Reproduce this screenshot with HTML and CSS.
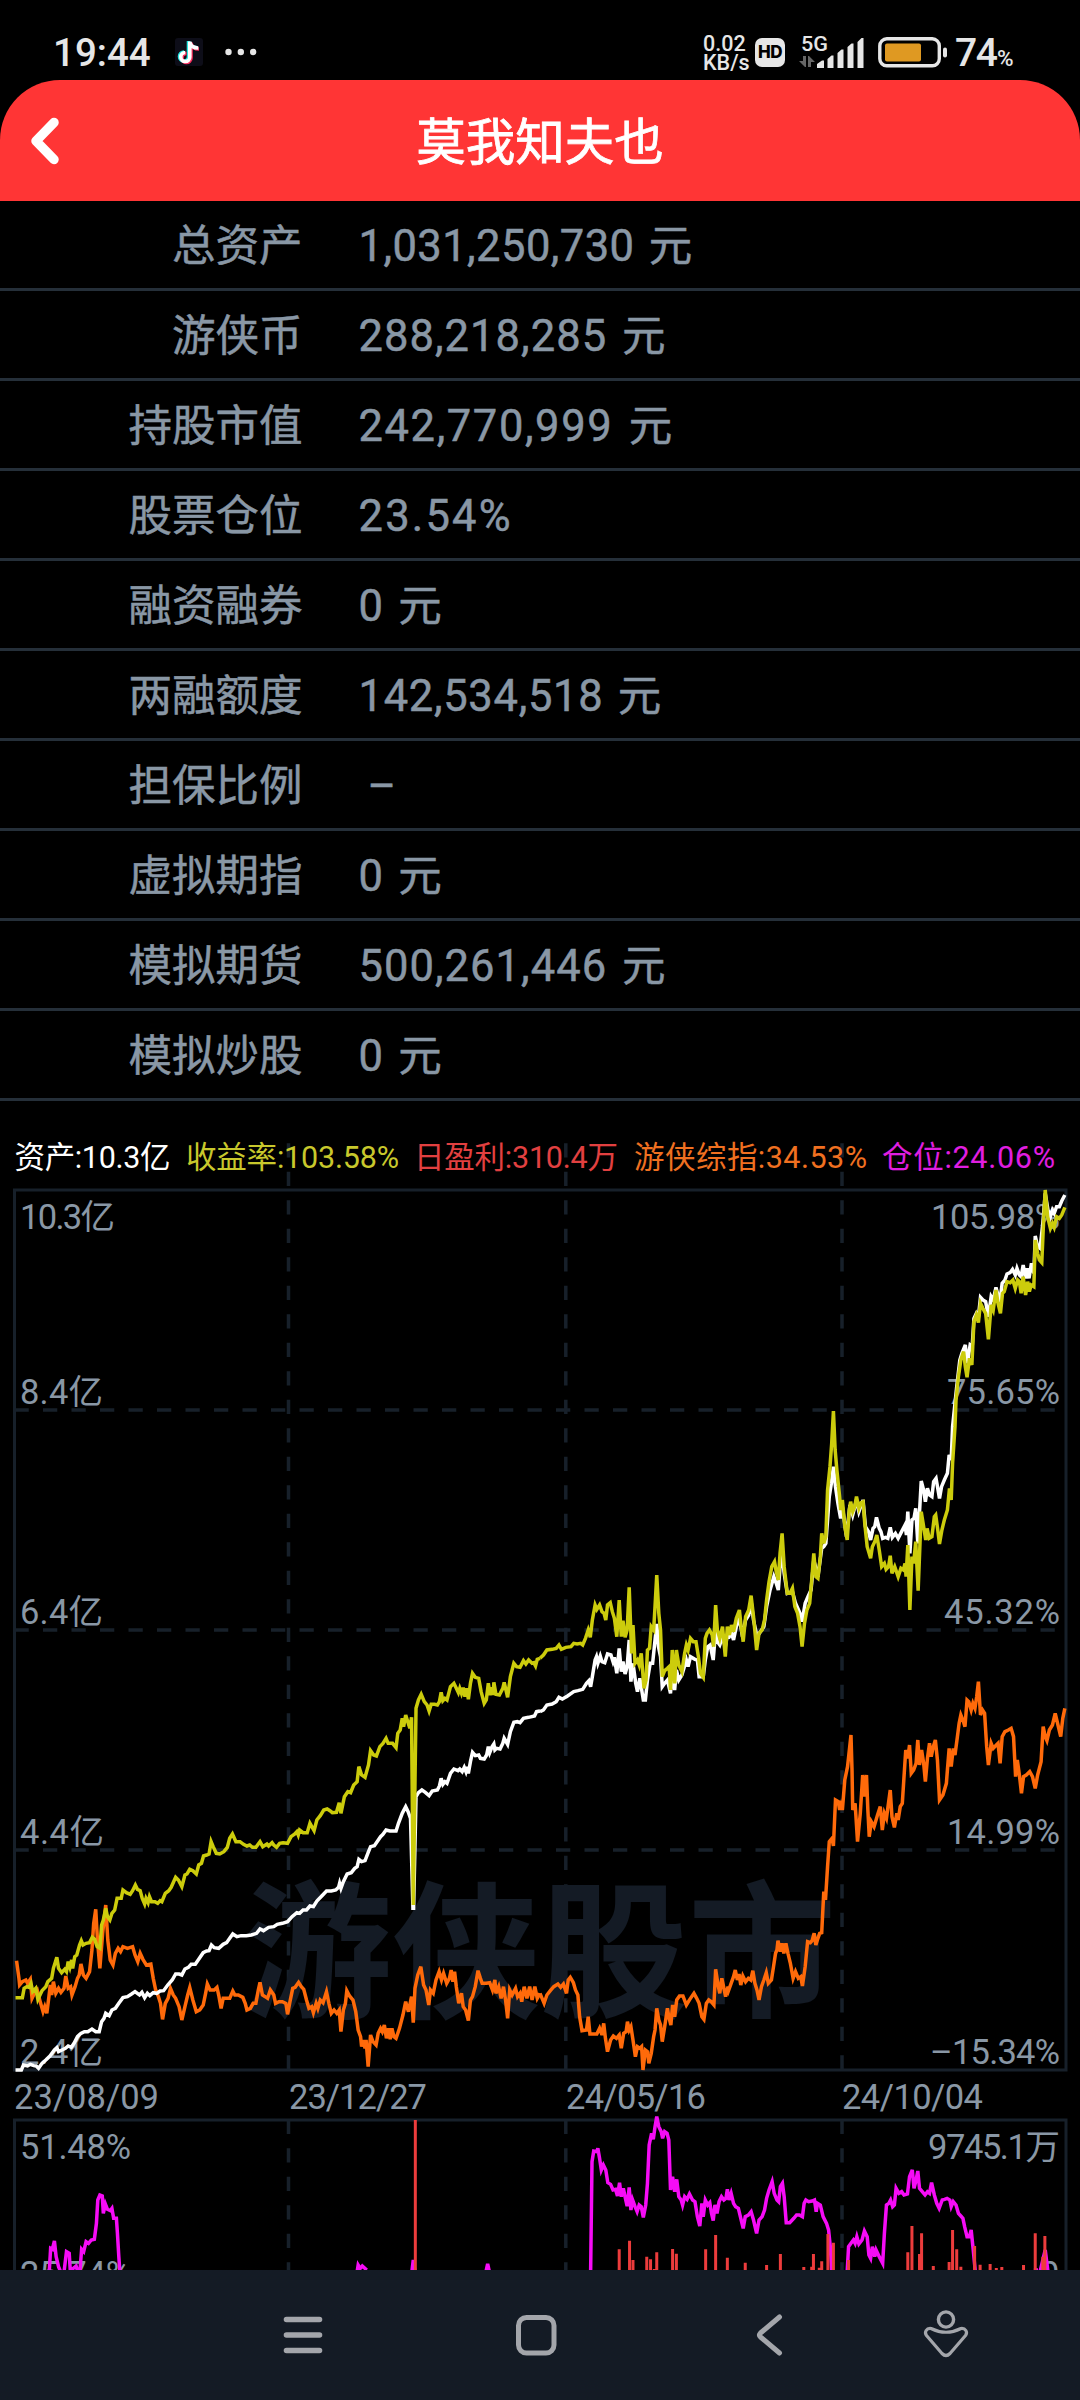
FILE: index.html
```html
<!DOCTYPE html>
<html lang="zh-CN">
<head>
<meta charset="utf-8">
<title>莫我知夫也</title>
<link rel="stylesheet" href="styles.css">
</head>
<body>
<div class="status">
  <span class="clock">19:44</span>
  <svg class="app" width="28" height="28" viewBox="0 0 28 28"><rect width="28" height="28" rx="3" fill="#0d0d18"/><g fill="none" stroke-width="3.6"><path stroke="#25e5e0" d="M13.5 3v15.500a4.500 4.500 0 1 1-4.500-4.500M13.500 4c1 4 4 5.500 8 5.500"/><path stroke="#fa2d5c" d="M16 4.500v15.500a4.500 4.500 0 1 1-4.500-4.500M16 5.500c1 4 4 5.500 8 5.500"/><path stroke="#fff" d="M14.800 3.500v15.500a4.500 4.500 0 1 1-4.500-4.500M14.800 4c1 4.500 4 6 8.500 6"/></g></svg>
  <svg class="dots" width="32" height="8" viewBox="0 0 32 8" fill="#e6e6e6"><circle cx="3.500" cy="4" r="3.200"/><circle cx="15.800" cy="4" r="3.200"/><circle cx="28.200" cy="4" r="3.200"/></svg>
  <span class="rate"><span>0.02</span><span>KB/s</span></span>
  <span class="hd">HD</span>
  <svg class="signal" width="68" height="36" viewBox="0 0 68 36"><text class="net" x="3" y="16.500" textLength="27" lengthAdjust="spacingAndGlyphs">5G</text><g fill="#666"><path d="M5 22h3v11h-1l-6-6h4zM10 22h1l6 6h-4v5h-3z"/></g><g fill="#e6e6e6"><path d="M19 34v-4l5-3.500h2V34zM29.500 34V25l4-3.500h2V34zM39.500 34V19l4-3.500h2V34zM49.500 34V13l4-3.500h2V34zM59.500 34V8l4-4h2V34z"/></g></svg>
  <svg class="battery" width="70" height="32" viewBox="0 0 70 32"><rect x="1.800" y="2.800" width="59.500" height="27" rx="7" fill="none" stroke="#e6e6e6" stroke-width="3.400"/><rect x="7" y="7.500" width="36" height="18" rx="2" fill="#df9922"/><rect x="65" y="11.500" width="4" height="10" rx="2" fill="#e6e6e6"/></svg>
  <span class="level">74</span><span class="pct">%</span>
</div>
<header class="top">
  <svg class="back" width="34" height="54" viewBox="0 0 34 54" fill="none" stroke="#fff" stroke-width="9.500" stroke-linecap="round" stroke-linejoin="round"><path d="M26 8.500L8 27l18 18.500"/></svg>
  <h1>莫我知夫也</h1>
</header>
<dl class="rows">
  <div><dt>总资产</dt><dd class="tight">1,031,250,730 元</dd></div>
  <div><dt>游侠币</dt><dd class="wide">288,218,285 元</dd></div>
  <div><dt>持股市值</dt><dd class="wider">242,770,999 元</dd></div>
  <div><dt>股票仓位</dt><dd class="widest">23.54%</dd></div>
  <div><dt>融资融券</dt><dd>0 元</dd></div>
  <div><dt>两融额度</dt><dd>142,534,518 元</dd></div>
  <div><dt>担保比例</dt><dd class="none">–</dd></div>
  <div><dt>虚拟期指</dt><dd>0 元</dd></div>
  <div><dt>模拟期货</dt><dd class="wide">500,261,446 元</dd></div>
  <div><dt>模拟炒股</dt><dd>0 元</dd></div>
</dl>
<svg class="chart" width="1080" height="1169" viewBox="0 1101 1080 1169">
  <g class="grid">
    <path class="dash" d="M14.500 1410H1066M14.500 1630H1066M14.500 1850H1066"/>
    <path class="dash" d="M288.500 1143.300V2070M565.800 1143.300V2070M842 1143.300V2070"/>
    <path class="dash" d="M288.500 2119.800V2300M565.800 2119.800V2300M842 2119.800V2300"/>
    <rect x="14.500" y="1190" width="1051.500" height="880"/>
    <rect x="14.500" y="2120" width="1051.500" height="300"/>
  </g>
  <text class="mark" x="244" y="2006" textLength="592">游侠股市</text>
  <g class="legend">
    <text x="14.500" y="1167.500" textLength="156" fill="#fff">资产:10.3亿</text>
    <text x="186" y="1167.500" textLength="213" fill="#c8c82c">收益率:103.58%</text>
    <text x="414" y="1167.500" textLength="204" fill="#e24040">日盈利:310.4万</text>
    <text x="634" y="1167.500" textLength="233" fill="#f07020">游侠综指:34.53%</text>
    <text x="882" y="1167.500" textLength="173" fill="#e01ee0">仓位:24.06%</text>
  </g>
  <g class="axis">
    <text x="20" y="1229" textLength="95">10.3亿</text>
    <text x="20" y="1404" textLength="83">8.4亿</text>
    <text x="20" y="1624" textLength="83">6.4亿</text>
    <text x="20" y="1844" textLength="84">4.4亿</text>
    <text x="20" y="2064" textLength="83">2.4亿</text>
    <text x="931" y="1229" textLength="129">105.98%</text>
    <text x="947" y="1404" textLength="113">75.65%</text>
    <text x="944" y="1624" textLength="116">45.32%</text>
    <text x="947" y="1844" textLength="113">14.99%</text>
    <text x="930" y="2064" textLength="130">–15.34%</text>
    <text x="14" y="2109" textLength="145">23/08/09</text>
    <text x="289" y="2109" textLength="138">23/12/27</text>
    <text x="566" y="2109" textLength="140">24/05/16</text>
    <text x="842" y="2109" textLength="141">24/10/04</text>
    <text x="20" y="2159" textLength="111">51.48%</text>
    <text x="20" y="2286" textLength="111">25.74%</text>
    <text x="928" y="2159" textLength="132">9745.1万</text>
    <text x="1040" y="2286">0</text>
  </g>
  <g class="line index">
    <path transform="translate(0 1650) scale(.34439 .33333)" d="M48 932 55 985 57 1005 65 995 75 990 80 1000 88 988 93 1045 100 1030 108 1020 118 1060 125 1085 130 1070 136 1090 142 1040 146 1005 150 1035 155 995 162 1030 170 1015 177 1027 186 1015 191 978 198 1015 205 1010 209 1035 218 1010 225 985 230 975 235 942 242 975 250 985 260 965 267 900 272 820 278 778 283 870 290 955 298 850 307 765 313 870 320 930 328 945 335 910 343 895 350 905 357 890 370 895 385 890 392 915 400 935 407 910 415 928 425 945 438 942 445 985 452 1020 460 1040 466 1060 472 1108 480 1060 488 1045 495 1015 503 1035 510 1045 520 1070 528 1110 537 1070 545 1035 551 1013 560 1050 570 1085 580 1080 590 1065 597 1030 602 1002 610 1020 622 1020 630 1012 635 1035 642 1075 648 1045 658 1045 667 1045 676 1023 682 1035 692 1035 705 1042 712 1060 717 1080 727 1075 735 1060 743 1060 750 1020 755 997 762 1035 770 1040 777 1045 785 1020 795 1035 800 1060 810 1055 820 1055 830 1060 835 1093 842 1055 850 1015 857 1012 867 997 875 1010 882 1018 890 1050 897 1075 905 1070 910 1088 918 1060 923 1075 930 1050 938 1058 948 1025 955 1060 962 1090 970 1080 978 1090 985 1080 990 1145 997 1080 1003 1060 1007 1022 1015 1038 1025 1050 1033 1085 1040 1140 1047 1160 1050 1190 1055 1170 1060 1195 1063 1170 1069 1250 1076 1155 1083 1175 1092 1185 1098 1150 1105 1135 1110 1145 1116 1125 1122 1165 1128 1135 1133 1168 1138 1135 1144 1160 1150 1165 1160 1135 1170 1095 1178 1055 1186 1085 1195 1040 1200 1118 1205 1015 1213 975 1222 950 1230 1005 1237 1020 1245 1065 1250 1020 1258 1030 1266 990 1275 965 1282 990 1288 970 1297 1000 1305 985 1310 960 1315 995 1320 965 1325 1010 1332 1060 1340 1030 1345 1070 1352 1080 1360 1112 1366 1050 1372 1040 1380 1010 1388 962 1395 985 1400 1000 1412 1000 1422 998 1430 1020 1437 990 1440 1030 1448 1010 1455 1045 1462 1010 1468 1050 1474 1105 1480 1020 1487 1035 1497 1015 1503 1040 1510 1030 1515 1055 1522 1010 1530 1045 1538 1010 1545 1050 1553 1010 1560 1045 1568 1030"/>
    <path transform="translate(540 1750) scale(.34439 .33333)" d="M0 730 12 760 20 735 30 722 40 710 52 702 60 712 68 702 77 730 82 690 88 682 97 698 103 720 110 735 115 800 122 842 135 840 140 800 145 852 155 852 165 852 173 835 180 855 185 820 190 865 196 905 205 870 213 858 222 865 230 855 236 895 243 850 250 845 254 815 259 840 264 830 270 870 277 920 283 890 290 895 295 890 299 960 306 900 312 905 316 940 323 910 330 860 334 840 339 775 345 810 350 825 355 875 362 830 370 775 374 800 380 825 385 765 391 800 397 750 405 738 415 738 425 765 435 748 447 730 455 745 462 760 470 800 476 808 483 760 490 750 497 755 505 765 510 658 517 705 522 730 528 685 533 710 539 740 546 710 548 720 555 700 562 680 567 660 573 690 578 672 583 705 589 678 597 695 605 685 612 690 618 662 624 700 630 720 636 750 643 710 650 690 657 668 663 700 672 690 678 650 684 610 688 600 691 572 698 605 703 580 708 610 714 580 720 610 727 640 735 685 742 665 750 685 757 680 762 708 770 650 777 575 785 578 790 572 796 550 801 585 807 565 812 550 818 548 824 425 829 450 835 350 840 275 848 265 852 288 858 150 866 155 870 180 873 152 878 180 885 90 893 50 903-45 906 60 908 180 915 160 922 275 930 190 937 75 943 140 948 75 952 180 956 260 962 215 970 230 980 195 988 170 994 240 1000 190 1006 205 1017 120 1022 200 1029 232 1036 190 1040 210 1046 170 1052 160 1062 0 1068 25 1073-15 1078 70 1085 60 1092 40 1097-30 1102 45 1108 0 1114 40 1119 95 1125 25 1131-20 1136 20 1142-10 1148-30 1154 30 1160 150 1170 135 1180 100 1183 60 1188-5 1194 50 1200-5 1205 15 1212-40 1217-80 1222-105 1228-90 1234-70 1240-150 1245-145 1252-120 1257-140 1263-125 1268-160 1273-205 1279-105 1285-120 1291-110 1297-10 1302 45 1310-20 1316-5 1325-15 1330-20 1336 40 1342-40 1350-55 1360-60 1368-65 1375-40 1381 80 1386 30 1392 75 1398 130 1404 80 1412 75 1422 65 1430 80 1438 115 1445 75 1455 35 1461-70 1467-40 1472-28 1479-60 1488-75 1496-110 1504-75 1512-40 1518-95 1524-125"/>
  </g>
  <g class="line asset">
    <path transform="translate(0 1650) scale(.34439 .33333)" d="M45 1260 62 1260 68 1245 80 1248 88 1243 98 1247 105 1248 112 1255 122 1240 133 1230 145 1218 158 1200 165 1193 170 1205 180 1200 190 1195 198 1188 207 1192 215 1180 225 1160 235 1150 245 1145 255 1145 267 1137 278 1145 288 1145 295 1115 302 1105 307 1090 317 1097 325 1080 335 1075 345 1060 357 1043 370 1040 382 1032 392 1025 405 1035 412 1027 420 1043 428 1030 435 1037 445 1028 455 1030 465 1023 475 1022 487 1005 500 990 510 972 520 972 528 975 537 957 547 952 555 943 567 943 577 928 590 908 600 903 607 902 614 885 622 893 635 895 648 883 658 878 667 865 676 852 688 860 700 857 715 857 730 855 745 850 755 837 765 842 780 832 795 830 805 823 820 820 835 815 848 800 862 788 870 790 880 780 890 780 900 768 910 770 920 753 935 737 948 723 962 723 975 720 983 712 986 700 990 715 997 695 1008 672 1020 668 1030 655 1037 650 1042 628 1050 635 1060 632 1070 605 1076 590 1087 587 1095 575 1105 560 1112 553 1121 540 1132 543 1150 543 1157 520 1168 490 1178 470 1185 485 1192 505 1199 775 1201 775 1208 440 1215 428 1225 420 1235 427 1246 437 1255 423 1270 420 1276 408 1281 385 1286 403 1292 395 1298 400 1308 370 1318 357 1330 362 1335 357 1342 365 1348 352 1353 365 1357 350 1360 370 1366 335 1372 307 1380 317 1390 315 1395 325 1406 327 1413 315 1418 290 1422 308 1429 290 1434 282 1437 300 1442 295 1452 297 1460 280 1464 265 1474 283 1482 245 1492 217 1502 215 1510 218 1520 205 1535 202 1552 198 1558 185 1568 183"/>
    <path transform="translate(540 1400) scale(.34439 .33333)" d="M0 935 10 930 20 915 35 912 47 905 55 892 65 897 80 888 98 875 110 872 124 868 135 850 142 842 147 860 152 830 160 780 164 770 168 790 175 768 180 785 188 788 196 762 206 765 212 785 216 772 223 820 230 745 236 815 241 785 247 822 253 800 259 720 264 845 270 790 278 850 283 875 290 835 300 900 306 900 312 840 320 790 327 790 334 720 339 672 344 740 350 770 355 860 362 850 370 840 379 880 384 810 391 870 396 810 403 840 412 825 425 780 430 800 437 770 450 778 457 780 462 830 474 830 480 780 487 740 494 735 503 780 510 690 515 725 522 735 530 710 538 740 544 705 550 710 556 700 562 720 570 680 579 655 588 710 597 660 606 645 613 605 620 660 630 710 640 695 650 680 658 620 668 570 679 530 686 550 692 570 697 500 703 460 709 520 718 580 733 575 742 610 755 640 761 665 770 610 778 590 787 570 795 480 807 530 818 445 824 440 830 430 840 290 846 250 852 200 858 260 865 310 873 355 878 320 890 410 900 315 908 345 919 300 926 335 938 300 945 380 954 395 960 420 967 385 972 380 977 352 985 385 990 395 995 415 1003 412 1010 415 1017 382 1023 412 1032 400 1040 415 1050 395 1060 375 1064 405 1068 335 1074 460 1080 360 1086 355 1091 325 1097 430 1107 243 1114 270 1119 305 1125 265 1131 285 1138 290 1143 245 1150 235 1155 265 1160 295 1166 260 1174 240 1183 220 1188 165 1194 180 1198 80 1201 50 1210-40 1219-120 1225-140 1235-165 1241-110 1249-165 1255-160 1260-245 1267-260 1273-250 1279-308 1286-300 1294-295 1302-250 1310-310 1316-300 1324-338 1331-310 1336-300 1342-350 1350-360 1356-378 1365-382 1372-392 1380-375 1385-395 1392-375 1397-370 1403-405 1410-365 1415-395 1420-365 1427-410 1434-380 1438-492 1445-460 1452-455 1460-530 1467-620 1475-570 1482-550 1488-570 1493-560 1500-580 1508-580 1515-597 1524-615"/>
  </g>
  <g class="line yield">
    <path transform="translate(0 1650) scale(.34439 .33333)" d="M45 1043 65 1043 70 1015 78 1010 84 1012 90 1000 95 1025 104 1015 110 1048 122 1022 133 1010 139 995 150 985 155 955 165 922 170 955 179 968 188 958 193 965 198 935 203 952 208 930 211 955 217 920 223 915 231 885 236 872 241 885 250 880 260 878 268 862 275 868 282 890 290 895 295 825 300 810 307 775 312 800 319 810 325 790 333 780 340 745 352 745 357 720 367 728 378 733 385 722 393 705 399 718 407 722 413 745 420 762 424 745 430 758 434 740 440 755 450 755 458 760 465 752 470 755 480 730 490 722 497 712 510 682 518 690 528 710 537 675 543 672 551 658 560 662 570 672 577 645 585 640 591 618 600 615 607 612 613 575 619 590 628 610 638 612 650 605 660 592 667 565 675 552 685 575 697 575 707 583 717 588 725 585 733 592 743 592 755 575 763 590 775 582 780 588 790 578 795 585 803 592 812 580 822 578 835 580 845 560 856 552 862 545 866 555 870 540 880 548 892 548 900 520 912 542 920 510 930 497 940 480 950 477 958 482 965 488 977 487 985 458 990 490 1000 440 1010 425 1018 428 1027 405 1037 395 1042 350 1050 375 1060 382 1070 345 1076 302 1085 315 1093 318 1103 290 1112 280 1121 265 1127 280 1140 280 1150 293 1155 250 1162 240 1168 205 1172 230 1178 195 1184 215 1190 235 1195 202 1200 765 1208 175 1215 150 1223 133 1232 155 1240 165 1246 183 1252 163 1262 163 1270 165 1276 155 1281 127 1286 152 1292 145 1298 150 1308 110 1318 100 1325 115 1331 128 1335 115 1340 130 1345 113 1350 140 1355 115 1360 148 1366 100 1372 70 1380 82 1390 85 1397 125 1406 160 1412 150 1418 100 1423 135 1429 112 1432 135 1434 97 1440 133 1450 135 1460 115 1464 97 1474 142 1482 80 1492 40 1500 50 1510 52 1520 32 1527 42 1535 30 1545 40 1550 38 1555 48 1560 28 1568 25"/>
    <path transform="translate(540 1400) scale(.34439 .33333)" d="M0 775 10 765 20 750 35 748 47 745 55 735 62 748 75 742 90 740 98 730 108 732 118 730 124 735 132 715 140 690 146 712 152 660 160 615 165 628 173 615 180 635 186 640 191 660 196 615 204 608 210 635 216 655 223 710 230 600 236 710 241 662 247 712 253 690 259 562 266 760 270 675 276 790 283 780 288 795 294 760 302 865 308 840 312 750 318 745 323 680 330 690 334 620 339 525 345 640 350 690 355 830 362 812 370 805 375 800 379 870 384 750 391 850 396 750 403 795 412 815 420 760 425 735 430 750 437 715 445 725 453 725 460 770 466 820 474 832 480 715 485 700 492 690 500 705 504 740 510 615 515 690 522 715 530 680 538 770 544 680 550 705 556 675 562 695 570 655 579 630 584 680 590 725 597 650 606 630 613 587 620 650 629 750 636 700 645 690 652 660 658 600 665 545 673 500 681 485 686 515 692 540 697 460 703 400 709 500 718 580 726 580 733 565 740 620 748 640 755 680 761 740 768 670 775 630 783 610 789 540 795 460 801 530 807 535 814 470 818 400 824 430 830 410 835 270 842 200 847 130 852 33 857 150 862 210 870 290 873 330 878 300 885 380 892 420 898 330 902 305 908 335 914 320 919 290 926 325 932 308 938 305 943 370 950 440 960 475 965 440 972 425 978 405 985 450 992 500 1000 490 1005 508 1012 500 1017 467 1022 520 1030 500 1040 530 1048 505 1055 510 1060 490 1063 530 1068 435 1074 630 1080 470 1085 490 1091 425 1098 572 1107 335 1114 380 1120 420 1124 385 1130 415 1138 410 1145 350 1149 345 1155 390 1160 432 1167 390 1174 360 1183 330 1189 265 1194 300 1198 190 1205 80 1208 0 1215-70 1222-120 1230-145 1235-100 1240-68 1247-125 1254-105 1260-235 1267-255 1273-232 1279-290 1286-275 1294-260 1302-182 1310-285 1316-270 1324-330 1330-290 1337-260 1343-320 1348-325 1356-355 1365-352 1373-360 1380-335 1387-360 1392-355 1397-320 1403-370 1410-315 1416-355 1421-325 1426-345 1434-340 1438-480 1445-440 1450-420 1457-412 1462-530 1467-630 1474-550 1482-515 1488-530 1493-518 1500-550 1508-545 1515-555 1524-578"/>
  </g>
  <g class="line position">
    <path transform="translate(0 2090) scale(.34439 .33333)" d="M143 545 147 475 152 478 158 453 163 500 170 530 176 545M186 545 193 485 201 490 204 540 213 535 221 528 226 545M232 545 237 478 243 485 250 455 257 460 265 450 274 448 280 400 284 330 290 315 297 318 300 370 306 342 312 358 320 362 325 355 330 385 338 385 341 430 345 500 348 545M1037 545 1040 525 1046 535 1052 528 1065 540M1196 545 1200 510 1205 545M1411 545 1416 522 1421 545"/>
    <path transform="translate(540 2090) scale(.34439 .33333)" d="M147 545 151 215 156 183 165 185 168 175 173 205 178 240 184 225 191 240 197 278 205 283 212 300 219 298 225 318 231 278 236 320 242 295 248 325 253 348 259 292 264 360 269 330 276 350 282 365 288 345 294 350 300 382 307 345 312 280 317 165 324 130 329 148 334 110 339 80 345 110 352 125 356 145 362 125 369 130 374 150 379 300 385 260 391 305 397 268 403 320 410 330 414 345 420 320 427 328 434 312 443 330 450 335 457 380 464 408 470 340 474 380 480 330 487 345 493 338 498 370 503 392 508 345 514 370 520 335 527 320 534 330 540 325 544 298 549 330 555 310 562 340 568 350 576 355 583 385 590 415 596 380 605 375 613 365 620 390 629 430 636 390 645 380 652 360 658 325 665 300 674 275 680 310 688 330 693 335 698 290 704 280 709 320 715 398 725 398 737 385 745 375 753 375 762 380 767 340 772 330 780 335 790 333 797 330 802 365 806 340 814 345 822 380 832 400 838 420 843 470 847 545M892 545 896 470 903 460 910 450 915 460 920 440 926 462 935 450 942 423 950 440 955 495 960 505 965 470 972 500 976 480 985 500 995 520 1000 430 1006 345 1013 340 1018 330 1024 350 1029 345 1034 295 1042 310 1050 305 1057 315 1067 312 1073 260 1081 240 1086 295 1091 275 1097 243 1102 295 1110 305 1118 315 1125 305 1131 310 1137 278 1145 315 1152 340 1159 355 1168 330 1175 328 1182 325 1190 330 1194 350 1200 335 1208 345 1215 370 1222 378 1228 385 1233 410 1240 440 1247 440 1252 420 1258 480 1264 545M1434 540H1446M1452 545 1467 480 1475 545"/>
  </g>
  <g class="line profit">
    <path transform="translate(0 2090) scale(.34439 .33333)" d="M1206 90V545"/>
    <path transform="translate(540 2090) scale(.34439 .33333)" d="M230 478V545M260 452V545M270 510V545M310 500V545M321 508V545M332 537V545M339 487V545M385 477V545M396 491V545M481 478V545M510 435V545M544 503V545M596 518V545M658 525V545M698 492V545M766 531V545M789 530V545M794 492V545M811 533V545M818 514V545M836 432V545M852 458V545M896 510V545M1068 487V545M1080 408V545M1102 492V545M1108 430V545M1142 528V545M1188 516V545M1198 420V545M1210 478V545M1222 530V545M1262 468V545M1278 524V545M1307 522V545M1325 534V545M1341 531V545M1404 525V545M1438 430V545M1460 500V545M1466 438V545"/>
  </g>
</svg>
<nav class="keys">
  <svg width="40" height="44" viewBox="0 0 40 44"><path d="M3.500 6.500h33M3.500 22h33M3.500 37.500h33" stroke-width="5.600"/></svg>
  <svg width="44" height="44" viewBox="0 0 44 44"><rect x="4.500" y="4.500" width="35.500" height="35.500" rx="8" stroke-width="5"/></svg>
  <svg width="30" height="44" viewBox="0 0 30 44"><path d="M24.500 4L5.500 20Q3.500 22 5.500 24L24.500 40" stroke-width="5"/></svg>
  <svg width="48" height="50" viewBox="0 0 48 50"><circle cx="24" cy="9.500" r="7.600" stroke-width="3.400"/><path d="M9 18.500Q24 26 39 18.500C43.500 18 46 22 43.500 25.500L28 43.500Q24 47.500 20 43.500L4.500 25.500C2 22 4.500 18 9 18.500Z" stroke-width="3.200"/></svg>
</nav>
</body>
</html>
```
FILE: styles.css
```css
* { box-sizing: border-box; }
body {
  margin: 0;
  width: 1080px;
  height: 2400px;
  overflow: hidden;
  display: flex;
  flex-direction: column;
  background: #000;
  color: #8997a5;
  font-family: Roboto, "Noto Sans CJK SC", sans-serif;
}
svg { display: block; flex: none; }

.status {
  height: 80px;
  padding: 24px 0 0 53px;
  display: flex;
  align-items: center;
  color: #e6e6e6;
  white-space: nowrap;
}
.clock { width: 122px; font-size: 38.500px; font-weight: 500; padding-top: 1px; }
.dots { margin-left: 22px; }
.rate {
  width: 52px; margin-left: 446px;
  display: flex; flex-direction: column;
  font-size: 21.500px; line-height: 19px; font-weight: 500;
  padding-top: 2px;
}
.hd {
  width: 30px; height: 29px; margin-right: 13px;
  border-radius: 7px; background: #e6e6e6; color: #000;
  font: 800 17px/29px Inter, sans-serif; letter-spacing: -.5px; text-align: center;
}
.net { font-size: 20.500px; font-weight: 500; fill: #e6e6e6; }
.battery { margin-left: 12px; }
.level { width: 42px; margin-left: 7px; font-size: 39px; font-weight: 500; letter-spacing: -1.500px; padding-top: 1px; }
.pct { font-size: 22.500px; font-weight: 500; padding-top: 12px; }

.top {
  height: 121px;
  display: grid;
  grid-template-columns: 120px 1fr 120px;
  align-items: center;
  background: #ff3535;
  border-radius: 60px 60px 0 0;
}
.back { margin-left: 28px; }
.top h1 { margin: 0; padding-top: 4px; color: #fff; font-size: 49.500px; line-height: 60px; font-weight: 400; text-align: center; -webkit-text-stroke: .8px #fff; }

.rows { margin: 0; }
.rows div {
  height: 90px;
  padding-top: 4px;
  display: grid;
  grid-template-columns: 302.500px 1fr;
  column-gap: 56px;
  align-items: center;
  border-bottom: 3px solid #252f39;
  font-size: 43.500px;
  line-height: 60px;
  -webkit-text-stroke: .5px #8997a5;
}
.rows dt { text-align: right; }
.rows dd { margin: 0; letter-spacing: .7px; word-spacing: 3px; }
.rows .tight { letter-spacing: .45px; }
.rows .wide { letter-spacing: 1.050px; }
.rows .wider { letter-spacing: 1.600px; }
.rows .widest { letter-spacing: 2.200px; }
.rows .none { padding-left: 9px; }

.grid { fill: none; stroke: #17202a; stroke-width: 3; }
.dash { stroke-width: 3.500; stroke-dasharray: 14.250 14.250; }
.mark { font-size: 148px; font-weight: 700; fill: #141b25; }
.legend { font-size: 30.500px; }
.axis { font-size: 34.500px; fill: #8997a5; }
.line { fill: none; stroke-width: 3.500; }
.line path { vector-effect: non-scaling-stroke; }
.index { stroke: #ff6a0a; }
.asset { stroke: #fff; }
.yield { stroke: #cccc0c; }
.position { stroke: #f60cf6; }
.profit { stroke: #ec3c3c; stroke-width: 3; }

.keys {
  height: 130px;
  display: grid;
  grid-template-columns: 283px 231px 241px 167px 1fr;
  align-items: center;
  background: #141b25;
}
.keys svg { fill: none; stroke: #a4a6ab; stroke-linecap: round; stroke-linejoin: round; }
.keys svg:first-child { grid-column: 2; }
```
